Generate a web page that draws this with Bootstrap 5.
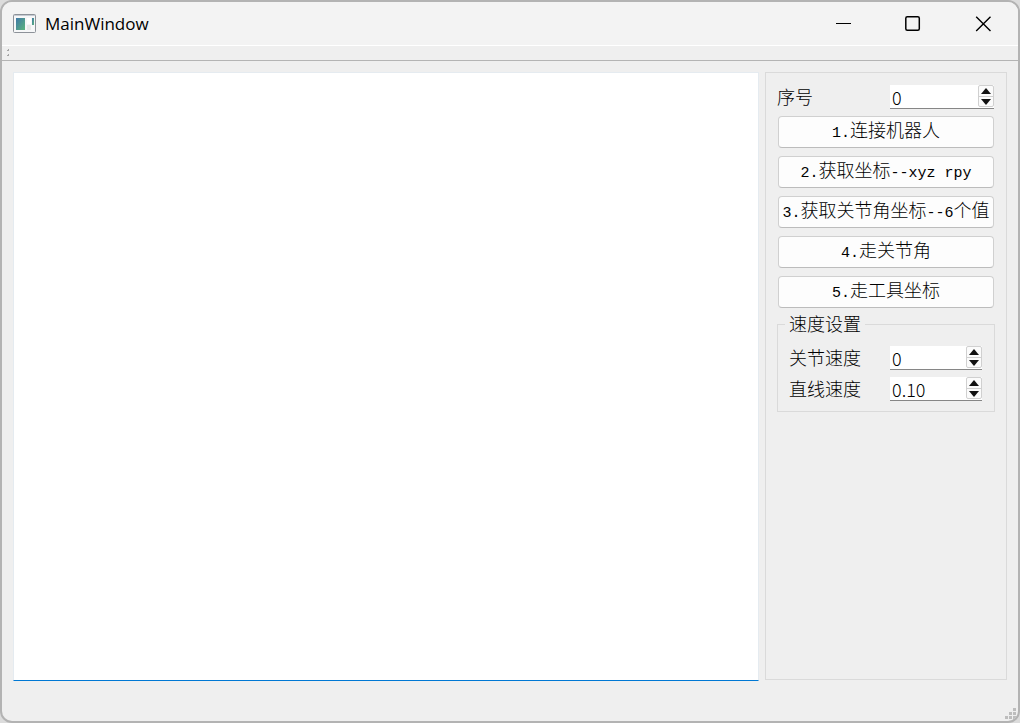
<!DOCTYPE html>
<html lang="zh-CN">
<head>
<meta charset="utf-8">
<meta name="viewport" content="width=device-width, initial-scale=1">
<title>MainWindow</title>
<link href="https://cdn.jsdelivr.net/npm/bootstrap@5.3.0/dist/css/bootstrap.min.css" rel="stylesheet">
<style>
body { background: #dcdcdc; color: #000; font: 300 18px/24px "Noto Sans CJK SC", sans-serif; }
.app-window { background: #efefef; border: 2px solid #b3b3b3; border-radius: 12px; }
.title-bar { height: 44px; background: #f3f3f3; border-bottom: 1px solid #fff; padding-left: 11px; }
.title-text { font: 400 17px/24px "Open Sans", sans-serif; margin-left: 9px; }
.caption-btn { width: 70px; height: 42px; display: flex; align-items: center; justify-content: center; }
.caption-btn, .step-btn { background: none; border: 0; padding: 0; color: #000; }
.tool-strip { height: 15px; border-bottom: 1px solid #b4b4b4; padding: 3px 4px; }
.work-area { padding: 11px 11px 0; gap: 6px; }
.log-box { background: #fff; border: 1px solid #e5ebf0; border-bottom: 1px solid #0078d4; border-radius: 0; resize: none; outline: 0; }
.side-panel { width: 242px; border: 1px solid #dadada; padding: 12px 11px; margin-bottom: 1px; }
.panel-row { height: 24px; }
.panel-row label { padding-bottom: 2px; }
.spin { background: #fff; border-bottom: 1px solid #868686; height: 24px; }
.spin-main { width: 104px; margin-right: 1px; }
.spin-sub { width: 92px; }
.half { font-family: "Liberation Mono", monospace; font-size: 15px; font-weight: 400; }
.spin input { border: 0; background: none; padding: 0 0 0 2px; outline: 0; color: #000; font-weight: 300; }
.steps { width: 16px; height: 22px; background: #fbfbfb; border: 1px solid #d0d0d0; border-radius: 2px; }
.step-btn { height: 10px; line-height: 0; }
.step-btn + .step-btn { border-top: 1px solid #d0d0d0; }
.cmd-list { margin: 7px 1px 0; }
.cmd { --bs-btn-padding-x: 0; --bs-btn-font-size: 18px; --bs-btn-bg: #fdfdfd; --bs-btn-color: #000; --bs-btn-border-color: #d0d0d0; --bs-btn-border-radius: 4px; --bs-btn-font-weight: 300; --bs-btn-line-height: 24px; height: 32px; padding: 0 0 1px; border-bottom-color: #bcbcbc; white-space: nowrap; }
.speed-box { border: 1px solid #dadada; margin-top: 4px; padding: 0 12px 10px 11px; }
.speed-box legend { float: none; width: auto; font-size: 18px; line-height: 22px; margin: 0 0 0 -4px; padding: 0 4px 2px; }
.speed-rows { gap: 7px; margin-top: 10px; }
.status-strip { height: 40px; padding: 0 2px 2px 0; }
</style>
</head>
<body>
<div class="app-window d-flex flex-column min-vh-100 overflow-hidden">
  <header class="title-bar d-flex align-items-center flex-shrink-0">
    <svg width="23" height="20" viewBox="0 0 23 20" aria-hidden="true">
      <defs><linearGradient id="pane" x1="0" y1="0" x2="1" y2="1"><stop offset="0" stop-color="#3f78a8"/><stop offset="1" stop-color="#5cb57c"/></linearGradient></defs>
      <rect x=".5" y=".5" width="22" height="18" rx="1" fill="#f6f7f8" stroke="#8d9299"/>
      <path d="M1 1.5h21" stroke="#c5cad2"/>
      <rect x="3" y="4" width="9" height="12" fill="url(#pane)"/>
      <rect x="14" y="4" width="4" height="6" fill="#fff"/><rect x="14" y="11" width="4" height="5" fill="#e9e9e9"/>
      <rect x="19" y="4" width="2" height="7" fill="url(#pane)"/>
    </svg>
    <span class="title-text">MainWindow</span>
    <div class="d-flex ms-auto">
      <button type="button" class="caption-btn" aria-label="最小化"><svg width="16" height="16" fill="none" stroke="#000"><path d="M1 7.500h15"/></svg></button>
      <button type="button" class="caption-btn" aria-label="最大化"><svg width="16" height="16" fill="none" stroke="#000" stroke-width="1.5"><rect x=".8" y=".8" width="13.5" height="13.5" rx="1.5"/></svg></button>
      <button type="button" class="caption-btn" aria-label="关闭"><svg width="16" height="16" fill="none" stroke="#000" stroke-width="1.4"><path d="M1.2.7l14.3 14.3M15.500.7L1.200 15"/></svg></button>
    </div>
  </header>
  <div class="tool-strip d-flex flex-shrink-0"><svg width="4" height="8" fill="#a5a5a5" aria-hidden="true"><path d="M2 0h1v2H1V1h1zM2 5h1v2H1V6h1z"/></svg></div>
  <main class="work-area d-flex flex-grow-1">
    <textarea class="log-box flex-grow-1" aria-label="日志"></textarea>
    <section class="side-panel flex-shrink-0">
      <div class="panel-row d-flex justify-content-between align-items-center">
        <label for="idx">序号</label>
        <div class="spin spin-main d-flex">
          <input id="idx" type="text" inputmode="numeric" value="0" class="flex-grow-1 w-50">
          <div class="steps d-flex flex-column"><button type="button" class="step-btn" aria-label="增加"><svg width="10" height="6" fill="#111"><path d="M0 6h10L5 0z"/></svg></button><button type="button" class="step-btn" aria-label="减少"><svg width="10" height="6" fill="#111"><path d="M0 0h10L5 6z"/></svg></button></div>
        </div>
      </div>
      <div class="cmd-list d-grid gap-2">
        <button type="button" class="btn cmd"><span class="half">1.</span>连接机器人</button>
        <button type="button" class="btn cmd"><span class="half">2.</span>获取坐标<span class="half">--xyz rpy</span></button>
        <button type="button" class="btn cmd"><span class="half">3.</span>获取关节角坐标<span class="half">--6</span>个值</button>
        <button type="button" class="btn cmd"><span class="half">4.</span>走关节角</button>
        <button type="button" class="btn cmd"><span class="half">5.</span>走工具坐标</button>
      </div>
      <fieldset class="speed-box">
        <legend>速度设置</legend>
        <div class="speed-rows d-flex flex-column">
          <div class="panel-row d-flex justify-content-between align-items-center">
            <label for="joint">关节速度</label>
            <div class="spin spin-sub d-flex">
              <input id="joint" type="text" inputmode="numeric" value="0" class="flex-grow-1 w-50">
              <div class="steps d-flex flex-column"><button type="button" class="step-btn" aria-label="增加"><svg width="10" height="6" fill="#111"><path d="M0 6h10L5 0z"/></svg></button><button type="button" class="step-btn" aria-label="减少"><svg width="10" height="6" fill="#111"><path d="M0 0h10L5 6z"/></svg></button></div>
            </div>
          </div>
          <div class="panel-row d-flex justify-content-between align-items-center">
            <label for="line">直线速度</label>
            <div class="spin spin-sub d-flex">
              <input id="line" type="text" inputmode="decimal" value="0.10" class="flex-grow-1 w-50">
              <div class="steps d-flex flex-column"><button type="button" class="step-btn" aria-label="增加"><svg width="10" height="6" fill="#111"><path d="M0 6h10L5 0z"/></svg></button><button type="button" class="step-btn" aria-label="减少"><svg width="10" height="6" fill="#111"><path d="M0 0h10L5 6z"/></svg></button></div>
            </div>
          </div>
        </div>
      </fieldset>
    </section>
  </main>
  <footer class="status-strip d-flex justify-content-end align-items-end flex-shrink-0">
    <svg width="11" height="11" fill="#bdbdbd" aria-hidden="true"><path d="M8 0h3v3H8zM4 4h3v3H4zM8 4h3v3H8zM0 8h3v3H0zM4 8h3v3H4zM8 8h3v3H8z"/></svg>
  </footer>
</div>
<script src="https://cdn.jsdelivr.net/npm/bootstrap@5.3.0/dist/js/bootstrap.bundle.min.js"></script>
</body>
</html>
